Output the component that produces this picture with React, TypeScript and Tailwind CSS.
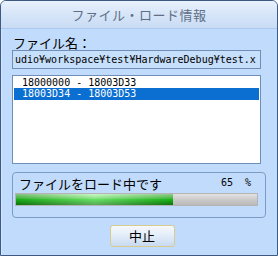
import React from "react";

const jp = { fontFamily: '"Noto Sans CJK JP", "Noto Sans", sans-serif' };
const mono = { fontFamily: '"DejaVu Sans Mono", "Liberation Mono", monospace' };

export default function App() {
  return (
    <div className="w-[278px] h-[256px] bg-white">
      <div className="w-[278px] h-[256px] flex flex-col border border-[#3e5a82] rounded-t-[6px] bg-[#c0dbfb] overflow-hidden">
        <div
          className="h-[28px] shrink-0 flex items-center justify-center border-b border-[#a9c9ee] bg-gradient-to-b from-[#e9f1fc] via-[#d6e5f8] to-[#cadcf4] text-[13px] text-[#5f6f86] tracking-[0.5px]"
          style={jp}
        >
          ファイル・ロード情報
        </div>
        <div className="flex-1 flex flex-col border-l border-[#d2e5fd] pl-[10px] pr-[16px]">
          <div className="h-[19px] mt-[2px] flex items-end text-[13px] text-black leading-none pl-[1px] pb-[1px]" style={jp}>
            ファイル名：
          </div>
          <div className="h-[19px] w-[249px] border border-[#6f8fb8] bg-[#c6dffb] flex items-center pl-[2px] text-[10px] text-black overflow-hidden whitespace-nowrap" style={mono}>
            udio¥workspace¥test¥HardwareDebug¥test.x
          </div>
          <div className="mt-[6px] h-[89px] w-[249px] border border-[#6f8fb8] bg-white flex flex-col pt-[1px] px-[1px] text-[10px]" style={mono}>
            <div className="h-[11px] leading-[11px] pl-[8px] text-black">18000000 - 18003D33</div>
            <div className="h-[12px] leading-[12px] pl-[8px] bg-[#0a6fd1] text-white">18003D34 - 18003D53</div>
          </div>
          <div className="mt-[8px] h-[46px] w-[254px] border border-[#7c9cc8] rounded-[4px] flex flex-col px-[2px]">
            <div className="h-[20px] flex items-center justify-between pl-[4px] pr-[12px]">
              <span className="text-[13px] text-black leading-none" style={jp}>ファイルをロード中です</span>
              <span className="text-[10px] text-black leading-none" style={mono}>65&nbsp;&nbsp;%</span>
            </div>
            <div className="h-[13px] w-[243px] border border-[#b4b4b4] bg-gradient-to-b from-[#e2e2e2] via-[#cacaca] to-[#bababa] flex overflow-hidden">
              <div className="relative w-[157px] h-full bg-gradient-to-b from-[#b8f0b4] via-[#1ed01a] to-[#0b7a0b]">
                <div className="absolute inset-0 bg-gradient-to-r from-[#0a5a0a]/30 via-[#f0fff0]/35 to-[#0a5a0a]/25" />
              </div>
            </div>
          </div>
          <div className="flex justify-center mt-[7px] pl-[11px]">
            <div className="w-[65px] h-[22px] rounded-[3px] border border-[#d8cc8c] bg-gradient-to-b from-[#f6f9fd] via-[#e2ecf8] to-[#c8daf0] flex items-center justify-center text-[13px] text-black" style={jp}>
              中止
            </div>
          </div>
        </div>
      </div>
    </div>
  );
}
